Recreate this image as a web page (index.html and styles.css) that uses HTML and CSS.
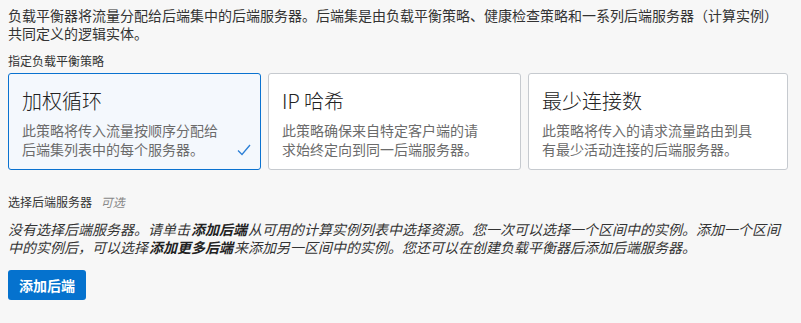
FILE: index.html
```html
<!DOCTYPE html>
<html lang="zh-CN">
<head>
    <meta charset="UTF-8">
    <meta name="viewport" content="width=device-width, initial-scale=1.0">
    <title>负载平衡策略</title>
    <link rel="stylesheet" href="styles.css">
</head>
<body>
    <p class="intro">负载平衡器将流量分配给后端集中的后端服务器。后端集是由负载平衡策略、健康检查策略和一系列后端服务器（计算实例）共同定义的逻辑实体。</p>

    <div class="field-label">指定负载平衡策略</div>
    <div class="policy-list">
        <div class="policy selected">
            <div class="policy-title">加权循环</div>
            <div class="policy-desc">此策略将传入流量按顺序分配给后端集列表中的每个服务器。</div>
            <svg class="check" width="14" height="12" viewBox="0 0 14 12">
                <path d="M1 6.5 L5 10.5 L13 1" fill="none" stroke="#2a7fd6" stroke-width="1.3"/>
            </svg>
        </div>
        <div class="policy">
            <div class="policy-title">IP 哈希</div>
            <div class="policy-desc">此策略确保来自特定客户端的请求始终定向到同一后端服务器。</div>
        </div>
        <div class="policy">
            <div class="policy-title">最少连接数</div>
            <div class="policy-desc">此策略将传入的请求流量路由到具有最少活动连接的后端服务器。</div>
        </div>
    </div>

    <div class="field-label backends-label">选择后端服务器 <span class="optional">可选</span></div>
    <p class="empty-note">没有选择后端服务器。请单击<b>添加后端</b>从可用的计算实例列表中选择资源。您一次可以选择一个区间中的实例。添加一个区间中的实例后，可以选择<b>添加更多后端</b>来添加另一区间中的实例。您还可以在创建负载平衡器后添加后端服务器。</p>

    <button class="btn-primary">添加后端</button>
</body>
</html>
```

FILE: styles.css
```css
body {
    font-family: "Noto Sans CJK SC", "Noto Sans", sans-serif;
    font-size: 14px;
    color: #333;
    background-color: #f7f7f7;
    margin: 0;
    padding: 6px 8px;
}
.intro {
    margin: 0;
    max-width: 776px;
    line-height: 18px;
}
.field-label {
    font-size: 12px;
    line-height: 16px;
    margin-top: 11px;
    color: #333;
}
.optional {
    font-style: italic;
    color: #888;
    margin-left: 6px;
}
.policy-list {
    display: grid;
    grid-template-columns: 253px 253px 260px;
    gap: 7px;
    margin-top: 4px;
}
.policy {
    position: relative;
    background-color: #fff;
    border: 1px solid #c6cacf;
    border-radius: 3px;
    padding: 13px 30px 10px 13px;
}
.policy.selected {
    background-color: #f4f8fd;
    border-color: #0a72d0;
}
.policy-title {
    font-size: 20px;
    font-weight: 300;
    line-height: 28px;
    color: #222;
}
.policy-desc {
    margin-top: 6px;
    line-height: 19px;
    color: #6b6b6b;
}
.check {
    position: absolute;
    right: 9px;
    bottom: 13px;
}
.backends-label {
    margin-top: 24px;
}
.empty-note {
    margin: 10px 0 0;
    max-width: 776px;
    line-height: 18px;
    font-style: italic;
    color: #333;
}
.empty-note b {
    color: #222;
    padding: 0 1px;
}
.btn-primary {
    display: block;
    margin-top: 14px;
    height: 30px;
    padding: 0 11px;
    border: none;
    border-radius: 3px;
    background-color: #0572ce;
    color: #fff;
    font-family: inherit;
    font-size: 14px;
    font-weight: bold;
}
```
